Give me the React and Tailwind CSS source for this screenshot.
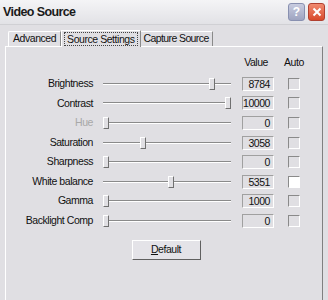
import React from 'react';

const rows = [
  { label: 'Brightness', value: '8784', pos: 0.865, auto: false },
  { label: 'Contrast', value: '10000', pos: 1, auto: false },
  { label: 'Hue', value: '0', pos: 0, auto: false, disabled: true },
  { label: 'Saturation', value: '3058', pos: 0.3, auto: false },
  { label: 'Sharpness', value: '0', pos: 0, auto: false },
  { label: 'White balance', value: '5351', pos: 0.53, auto: true },
  { label: 'Gamma', value: '1000', pos: 0, auto: false },
  { label: 'Backlight Comp', value: '0', pos: 0, auto: false },
];

const Slider = ({ pos }) => (
  <div className="relative w-[128px] h-[14px]">
    <div className="absolute left-0 right-0 top-[6px] h-[2px] border-t border-[#8a8a8a] border-b border-b-white" />
    <div
      className="absolute top-[1px] w-[6px] h-[12px] bg-[#e0dfe3] border border-t-white border-l-white border-r-[#707070] border-b-[#707070]"
      style={{ left: `${pos * 122}px` }}
    />
  </div>
);

const App = () => {
  return (
    <div className="w-[328px] h-[300px] overflow-hidden bg-[#e0dfe3] text-[10.5px] tracking-[-0.45px] text-[#111]" style={{ fontFamily: '"Liberation Sans", Arial, sans-serif' }}>
      {/* Title bar */}
      <div className="h-[25px] flex items-center justify-between pl-[3px] pr-[3px] bg-gradient-to-b from-[#f4f4f6] to-[#e2e2e6] border-b border-[#d0d0d4]">
        <span className="font-bold text-[12.5px] tracking-[-0.6px] text-[#1a1a1a]">Video Source</span>
        <div className="flex gap-[3px] tracking-normal">
          <div className="w-[17px] h-[18px] rounded-[3px] bg-gradient-to-b from-[#c8cce0] to-[#9ea4c0] border border-[#8890b0] flex items-center justify-center text-white font-bold text-[12px]">?</div>
          <div className="w-[17px] h-[18px] rounded-[3px] bg-gradient-to-b from-[#f08a70] to-[#d84a2a] border border-[#b04030] flex items-center justify-center">
            <svg width="10" height="10" viewBox="0 0 10 10">
              <path d="M1.5 1.5 L8.5 8.5 M8.5 1.5 L1.5 8.5" stroke="white" strokeWidth="2" />
            </svg>
          </div>
        </div>
      </div>

      {/* Tabs */}
      <div className="pl-[8px] pt-[5px] flex items-end h-[21px]">
        <div className="h-[15px] px-[4px] flex items-center border-t border-l border-white border-r border-r-[#8a8a8a] rounded-tl-[2px]">
          Advanced
        </div>
        <div className="relative h-[17px] px-[2px] -mb-[1px] flex items-center bg-[#e0dfe3] border-t border-l border-white border-r border-r-[#8a8a8a] z-10">
          <span className="border border-dotted border-[#444] px-[2px] leading-[12px]">Source Settings</span>
        </div>
        <div className="h-[15px] px-[3px] flex items-center border-t border-white border-r border-r-[#8a8a8a] tracking-[-0.6px]">
          Capture Source
        </div>
      </div>

      {/* Panel */}
      <div className="ml-[5px] w-[318px] h-[260px] border-t border-l border-white border-r border-r-[#808080] pt-[10px]">
        <div className="flex h-[12px] items-center">
          <div className="w-[236px]" />
          <div className="w-[26px] text-right">Value</div>
          <div className="ml-[16px]">Auto</div>
        </div>
        <div className="mt-[5px] flex flex-col">
          {rows.map((r) => (
            <div key={r.label} className="flex items-center h-[19.6px]">
              <div className={`w-[87px] text-right ${r.disabled ? 'text-[#a8a8a8]' : ''}`}>{r.label}</div>
              <div className="ml-[10px]">
                <Slider pos={r.pos} />
              </div>
              <div className="ml-[11px] w-[32px] h-[14px] border border-[#a0a0a0] border-r-white border-b-white text-right pr-[3px] leading-[12px]">
                {r.value}
              </div>
              <div className={`ml-[14px] w-[12px] h-[12px] border border-t-[#8a8a8a] border-l-[#8a8a8a] border-r-white border-b-white ${r.auto ? 'bg-white' : ''}`} />
            </div>
          ))}
        </div>
        <div className="mt-[9px] flex justify-center pl-[4px]">
          <div className="w-[69px] h-[20px] flex items-center justify-center border border-t-white border-l-white border-r-[#606060] border-b-[#606060] bg-[#e4e3e8]">
            <span><span className="underline">D</span>efault</span>
          </div>
        </div>
      </div>
    </div>
  );
};

export default App;
